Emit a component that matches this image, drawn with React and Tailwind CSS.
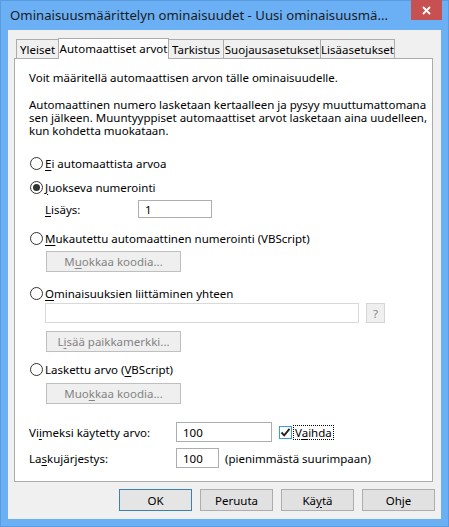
import React from 'react'

// ── small pieces ──────────────────────────────────────────────
const U = ({ children }) => <span className="underline underline-offset-[2px]">{children}</span>

function Radio({ checked, children }) {
  return (
    <div className="flex items-center h-[16px] pl-[15px]">
      <span className="w-[13px] h-[13px] rounded-full border border-[#333] bg-white flex items-center justify-center shrink-0">
        {checked && <span className="w-[7px] h-[7px] rounded-full bg-[#333]" />}
      </span>
      <span className="ml-[2px] whitespace-nowrap">{children}</span>
    </div>
  )
}

function GrayButton({ children }) {
  return (
    <div className="ml-[31px] w-[135px] h-[21px] border border-[#bfbfbf] bg-[#efefef] text-[#838383] flex items-center justify-center whitespace-nowrap">
      {children}
    </div>
  )
}

const tabBase = 'h-[19px] border-[#acacac] bg-[#f0f0f0] flex items-center justify-center whitespace-nowrap'

export default function App() {
  return (
    <div className="w-[449px] h-[527px] bg-[#6bb0f5] border border-[#5a9be0] flex flex-col font-['Noto_Sans',sans-serif] text-[11.5px] leading-[13px] text-black">
      {/* title bar */}
      <div className="h-[29px] shrink-0 flex items-start">
        <div className="pl-[9px] pt-[5px] text-[13.2px] leading-[18px] text-[#1b1b1b] whitespace-nowrap">
          Ominaisuusmäärittelyn ominaisuudet - Uusi ominaisuusmä...
        </div>
        <div className="ml-auto mr-[6px] w-[31px] h-[20px] -mt-px bg-[#c75050] flex items-center justify-center shrink-0">
          <svg width="9" height="9" viewBox="0 0 9 9">
            <path d="M1 1 L8 8 M8 1 L1 8" stroke="#fff" strokeWidth="1.8" />
          </svg>
        </div>
      </div>

      {/* client area */}
      <div className="mx-[7px] mb-[7px] flex-1 bg-[#f0f0f0] flex flex-col pt-[8px]">
        {/* tabs */}
        <div className="flex items-end h-[20px] shrink-0 ml-[8px] relative z-10">
          <div className={`${tabBase} w-[42px] border-l border-t`}>Yleiset</div>
          <div className="w-[111px] h-[21px] -mb-px border-l border-t border-r border-[#acacac] bg-white flex items-start justify-center pt-[3px] whitespace-nowrap">
            Automaattiset arvot
          </div>
          <div className={`${tabBase} w-[54px] border-t`}>Tarkistus</div>
          <div className={`${tabBase} w-[97px] border-l border-t`}>Suojausasetukset</div>
          <div className={`${tabBase} w-[75px] border-l border-t border-r`}>Lisäasetukset</div>
        </div>

        {/* panel */}
        <div className="ml-[6px] w-[419px] h-[424px] shrink-0 border border-[#acacac] bg-white flex flex-col">
          <p className="mt-[12px] pl-[14px] whitespace-nowrap">Voit määritellä automaattisen arvon tälle ominaisuudelle.</p>
          <p className="mt-[14px] pl-[14px] whitespace-nowrap">
            Automaattinen numero lasketaan kertaalleen ja pysyy muuttumattomana
            <br />sen jälkeen. Muuntyyppiset automaattiset arvot lasketaan aina uudelleen,
            <br />kun kohdetta muokataan.
          </p>

          <div className="mt-[18px]"><Radio><U>E</U>i automaattista arvoa</Radio></div>
          <div className="mt-[8px]"><Radio checked><U>J</U>uokseva numerointi</Radio></div>
          <div className="mt-[5px] flex items-center h-[18px] pl-[30px]">
            <span className="w-[93px]"><U>L</U>isäys:</span>
            <div className="w-[74px] h-[18px] border border-[#abadb3] flex items-center pl-[6px]">1</div>
          </div>

          <div className="mt-[12px]"><Radio><U>M</U>ukautettu automaattinen numerointi (VBScript)</Radio></div>
          <div className="mt-[5px]"><GrayButton>M<U>u</U>okkaa koodia...</GrayButton></div>

          <div className="mt-[13px]"><Radio><U>O</U>minaisuuksien liittäminen yhteen</Radio></div>
          <div className="mt-[2px] flex items-center ml-[30px] gap-[7px]">
            <div className="w-[314px] h-[20px] border border-[#d9d9d9] bg-white" />
            <div className="w-[19px] h-[20px] border border-[#d5d5d5] bg-[#efefef] text-[#838383] flex items-center justify-center">?</div>
          </div>
          <div className="mt-[8px]"><GrayButton>L<U>i</U>sää paikkamerkki...</GrayButton></div>

          <div className="mt-[9px]"><Radio>Laskettu arvo (<U>V</U>BScript)</Radio></div>
          <div className="mt-[6px]"><GrayButton>Muo<U>k</U>kaa koodia...</GrayButton></div>

          <div className="mt-[18px] flex items-center h-[20px] pl-[14px]">
            <span className="w-[147px] whitespace-nowrap">Vi<U>i</U>meksi käytetty arvo:</span>
            <div className="w-[96px] h-[20px] border border-[#abadb3] flex items-center pl-[6px]">100</div>
            <span className="ml-[7px] w-[13px] h-[13px] border border-[#3399ff] bg-white flex items-center justify-center">
              <svg width="11" height="11" viewBox="0 0 11 11">
                <path d="M1.5 5.5 L4.2 8.3 L9.5 1.8" fill="none" stroke="#222" strokeWidth="1.9" />
              </svg>
            </span>
            <span className="ml-[1px] px-[1px] border border-dotted border-black leading-[13px]">V<U>a</U>ihda</span>
          </div>
          <div className="mt-[6px] flex items-center h-[20px] pl-[14px]">
            <span className="w-[147px] whitespace-nowrap">La<U>s</U>kujärjestys:</span>
            <div className="w-[43px] h-[20px] border border-[#abadb3] flex items-center pl-[6px]">100</div>
            <span className="ml-[6px] whitespace-nowrap">(pienimmästä suurimpaan)</span>
          </div>
        </div>

        {/* dialog buttons */}
        <div className="mt-[7px] flex justify-end gap-[8px] pr-[6px]">
          <div className="w-[73px] h-[22px] border border-[#3c7fb1] bg-[#e5e5e5] flex items-center justify-center">OK</div>
          <div className="w-[73px] h-[22px] border border-[#adadad] bg-[#e1e1e1] flex items-center justify-center">Peruuta</div>
          <div className="w-[73px] h-[22px] border border-[#adadad] bg-[#e1e1e1] flex items-center justify-center">Kä<U>y</U>tä</div>
          <div className="w-[73px] h-[22px] border border-[#adadad] bg-[#e1e1e1] flex items-center justify-center">Ohje</div>
        </div>
      </div>
    </div>
  )
}
